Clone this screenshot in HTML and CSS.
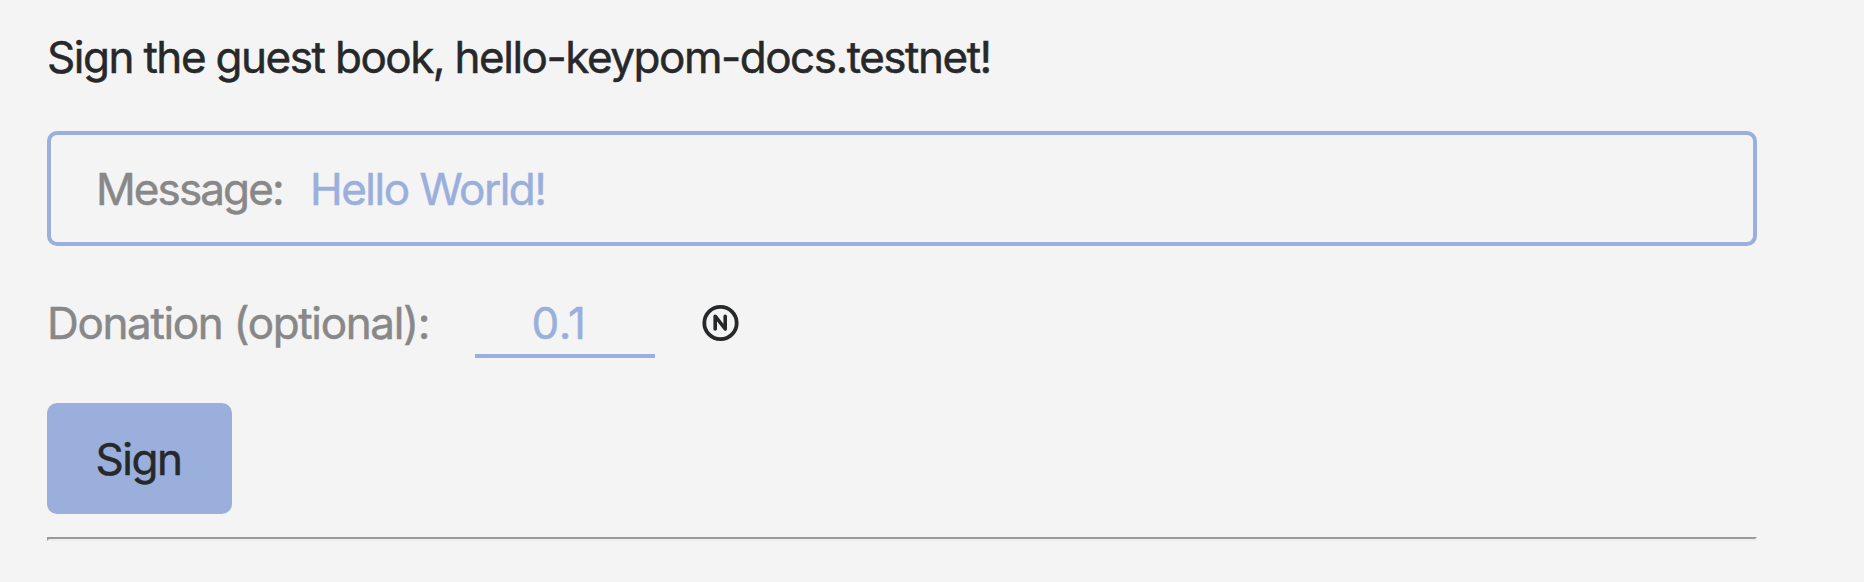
FILE: index.html
```html
<!DOCTYPE html>
<html lang="en">
<head>
<meta charset="utf-8">
<title>Guest Book</title>
<link rel="stylesheet" href="styles.css">
</head>
<body>
<main class="guest-book">
  <h1 class="title">Sign the guest book, hello-keypom-docs.testnet!</h1>
  <div class="message"><span class="label message-label">Message:</span><span class="value message-value">Hello World!</span></div>
  <div class="donation">
    <span class="label donation-label">Donation (optional):</span>
    <span class="amount value">0.1</span>
    <svg class="near" viewBox="0 0 36 36" fill="none" stroke="#262829"><circle cx="18.5" cy="18" r="16.2" stroke-width="3.8"/><path d="M13.2 24V11.2L23.2 24V11.2" stroke-width="3.6" stroke-linecap="round" stroke-linejoin="round"/></svg>
  </div>
  <button class="sign">Sign</button>
  <hr class="rule">
</main>
</body>
</html>
```
FILE: styles.css
```css
* { box-sizing: border-box; }
body { margin: 0; background: #f4f4f4; font-family: Inter, sans-serif; font-size: 44px; line-height: 56px; color: #262829; letter-spacing: -1.5px; -webkit-text-stroke: 0.5px; }
.guest-book { width: 1710px; margin-left: 47px; padding-top: 29px; }
.title { margin: 0; font-size: inherit; font-weight: 400; white-space: nowrap; word-spacing: -0.4px; letter-spacing: -1.48px; }
.message { display: flex; align-items: center; height: 115px; margin-top: 46px; padding: 0 45px; border: 4px solid #9aafdc; border-radius: 10px; }
.label { color: #888; white-space: nowrap; }
.value { color: #9aafdc; }
.message-label { width: 214px; letter-spacing: -1.9px; }
.donation { display: flex; align-items: center; height: 112px; margin-top: 21px; }
.donation-label { width: 428px; letter-spacing: -1.35px; }
.amount { width: 180px; height: 70px; padding: 7px 12px 0 0; border-bottom: 4px solid #9aafdc; text-align: center; letter-spacing: 0.5px; }
.near { width: 36px; height: 36px; margin-left: 47px; overflow: visible; }
.sign { display: block; width: 185px; height: 111px; margin-top: 24px; padding: 0 2px 0 0; border: 0; border-radius: 10px; background: #9aafdc; color: #262829; font: inherit; letter-spacing: inherit; }
.rule { margin: 23px 0 0; border: 2px solid; border-color: #9a9a9a #eee #eee #9a9a9a; }
```
